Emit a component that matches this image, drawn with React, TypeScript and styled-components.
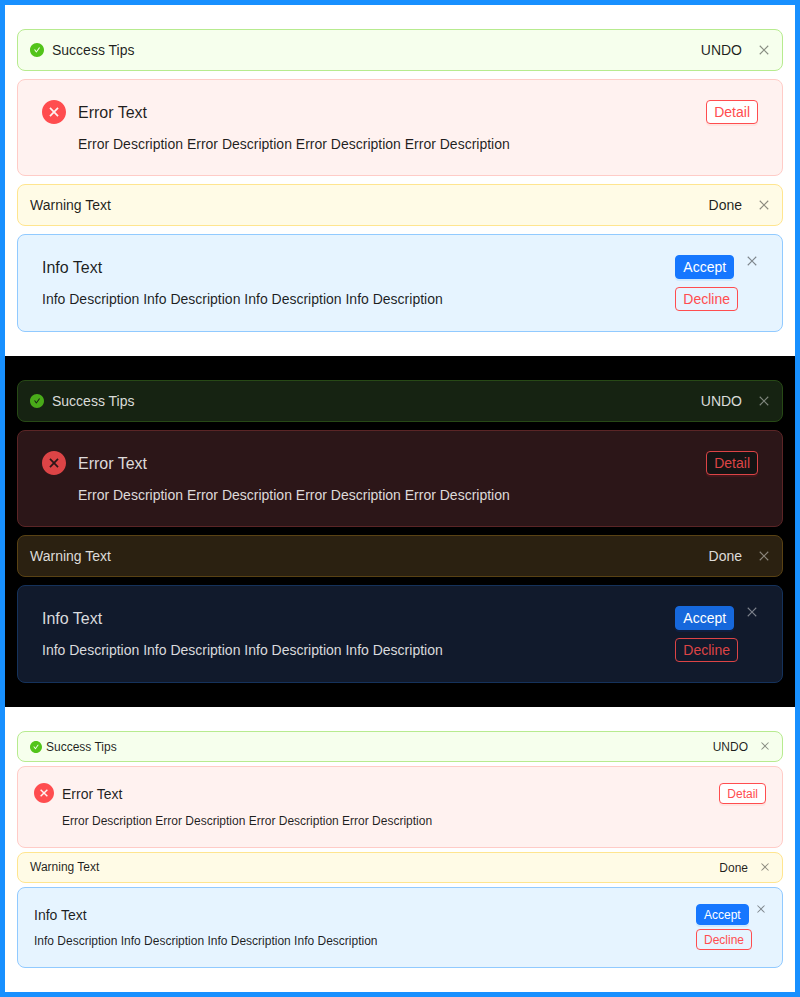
import React from "react";
import styled, { createGlobalStyle, css, ThemeProvider } from "styled-components";

type Kind = "success" | "error" | "warning" | "info";

const light = {
  page: "#ffffff",
  text: "rgba(0, 0, 0, 0.88)",
  close: "rgba(0, 0, 0, 0.45)",
  control: "#ffffff",
  success: { bg: "#f6ffed", border: "#b7eb8f", main: "#52c41a" },
  error: { bg: "#fff2f0", border: "#ffccc7", main: "#ff4d4f" },
  warning: { bg: "#fffbe6", border: "#ffe58f", main: "#faad14" },
  info: { bg: "#e6f4ff", border: "#91caff", main: "#1677ff" },
  primaryShadow: "rgba(5, 145, 255, 0.1)",
  dangerShadow: "rgba(255, 38, 5, 0.06)",
};

const dark: typeof light = {
  page: "#000000",
  text: "rgba(255, 255, 255, 0.85)",
  close: "rgba(255, 255, 255, 0.45)",
  control: "#141414",
  success: { bg: "#162312", border: "#274916", main: "#49aa19" },
  error: { bg: "#2c1618", border: "#5b2526", main: "#dc4446" },
  warning: { bg: "#2b2111", border: "#594214", main: "#d89614" },
  info: { bg: "#111a2c", border: "#15325b", main: "#1668dc" },
  primaryShadow: "rgba(0, 60, 180, 0.15)",
  dangerShadow: "rgba(238, 38, 56, 0.11)",
};

const regular = {
  font: 14,
  line: 22 / 14,
  title: 16,
  gap: 8,
  rowPad: "8px 12px",
  blockPad: "20px 24px",
  icon: 14,
  bigIcon: 24,
  bigIconGap: 12,
  control: 24,
  closeSize: 12,
  // Extra padding that centres odd-height controls on whole pixels.
  opticalPad: 0,
};

const compact: typeof regular = {
  font: 12,
  line: 20 / 12,
  title: 14,
  gap: 4,
  rowPad: "4px 12px",
  blockPad: "16px",
  icon: 12,
  bigIcon: 20,
  bigIconGap: 8,
  control: 21,
  closeSize: 10,
  opticalPad: 1,
};

type Theme = { c: typeof light; s: typeof regular };

const GlobalStyle = createGlobalStyle`
  *, *::before, *::after { box-sizing: border-box; }
  body { margin: 0; overflow: hidden; }
`;

const Frame = styled.main`
  height: 997px;
  border: 5px solid #1890ff;
  background: #ffffff;
  font-family: "Liberation Sans", Arial, sans-serif;
  overflow: hidden;
`;

const Section = styled.section<{ theme: Theme }>`
  display: flex;
  flex-direction: column;
  gap: ${({ theme }) => theme.s.gap}px;
  padding: 24px 12px;
  background: ${({ theme }) => theme.c.page};
  color: ${({ theme }) => theme.c.text};
  font-size: ${({ theme }) => theme.s.font}px;
  line-height: ${({ theme }) => theme.s.line};
`;

const AlertBox = styled.div<{ $kind: Kind; $block: boolean; theme: Theme }>`
  display: flex;
  align-items: ${({ $block }) => ($block ? "flex-start" : "center")};
  padding: ${({ theme, $block }) => ($block ? theme.s.blockPad : theme.s.rowPad)};
  border: 1px solid ${({ theme, $kind }) => theme.c[$kind].border};
  border-radius: 8px;
  background: ${({ theme, $kind }) => theme.c[$kind].bg};
`;

const Icon = styled.svg<{ $kind: Kind; $block?: boolean; theme: Theme }>`
  flex: none;
  display: block;
  fill: ${({ theme, $kind }) => theme.c[$kind].main};
  ${({ theme, $block }) => css`
    width: ${$block ? theme.s.bigIcon : theme.s.icon}px;
    height: ${$block ? theme.s.bigIcon : theme.s.icon}px;
    margin-right: ${$block ? theme.s.bigIconGap : theme.s.gap}px;
  `}
`;

const Content = styled.div`
  flex: 1;
  min-width: 0;
`;

const Title = styled.div<{ theme: Theme }>`
  margin-bottom: ${({ theme }) => theme.s.gap}px;
  font-size: ${({ theme }) => theme.s.title}px;
`;

const Actions = styled.div<{ theme: Theme }>`
  display: flex;
  flex-direction: column;
  align-items: flex-start;
  gap: ${({ theme }) => theme.s.gap}px;
  margin-left: ${({ theme }) => theme.s.gap}px;
`;

const Button = styled.button<{ $look: "text" | "danger" | "ghost" | "primary"; theme: Theme }>`
  display: flex;
  align-items: center;
  justify-content: center;
  height: ${({ theme }) => theme.s.control}px;
  padding: ${({ theme }) => theme.s.opticalPad}px 7px 0;
  border: 1px solid transparent;
  border-radius: 4px;
  background: transparent;
  color: inherit;
  font: inherit;
  ${({ theme, $look }) =>
    $look === "primary" &&
    css`
      background: ${theme.c.info.main};
      border-color: ${theme.c.info.main};
      color: #ffffff;
      box-shadow: 0 2px 0 ${theme.c.primaryShadow};
    `}
  ${({ theme, $look }) =>
    ($look === "danger" || $look === "ghost") &&
    css`
      border-color: ${theme.c.error.main};
      color: ${theme.c.error.main};
    `}
  ${({ theme, $look }) =>
    $look === "danger" &&
    css`
      background: ${theme.c.control};
      box-shadow: 0 2px 0 ${theme.c.dangerShadow};
    `}
`;

const CloseButton = styled.button<{ theme: Theme }>`
  flex: none;
  margin: 0 0 0 ${({ theme }) => theme.s.gap}px;
  padding: 0 0 ${({ theme }) => theme.s.opticalPad}px;
  border: 0;
  background: transparent;
  color: ${({ theme }) => theme.c.close};

  svg {
    display: block;
    width: ${({ theme }) => theme.s.closeSize}px;
    height: ${({ theme }) => theme.s.closeSize}px;
    fill: currentColor;
  }
`;

function SuccessIcon() {
  return (
    <Icon $kind="success" viewBox="64 64 896 896" aria-hidden="true">
      <path d="M512 64C264.6 64 64 264.6 64 512s200.6 448 448 448 448-200.6 448-448S759.4 64 512 64zm193.5 301.7l-210.6 292a31.8 31.8 0 01-51.7 0L318.5 484.9c-3.8-5.3 0-12.7 6.5-12.7h46.9c10.2 0 19.9 4.9 25.9 13.3l71.2 98.8 157.2-218c6-8.3 15.6-13.3 25.9-13.3H699c6.5 0 10.3 7.4 6.5 12.7z" />
    </Icon>
  );
}

function ErrorIcon() {
  return (
    <Icon $kind="error" $block viewBox="64 64 896 896" fillRule="evenodd" aria-hidden="true">
      <path d="M512 64c247.4 0 448 200.6 448 448S759.4 960 512 960 64 759.4 64 512 264.6 64 512 64zM640 338.8L512 466.75 384 338.8 338.8 384 466.75 512 338.8 640 384 685.2 512 557.25 640 685.2 685.2 640 557.25 512 685.2 384z" />
    </Icon>
  );
}

function Close() {
  return (
    <CloseButton type="button" aria-label="Close">
      <svg viewBox="64 64 896 896" aria-hidden="true">
        <path d="M799.9 166.3L857.7 224.1 569.93 512 857.7 799.9 799.9 857.7 512 569.93 224.1 857.7 166.3 799.9 454.07 512 166.3 224.1 224.1 166.3 512 454.07z" />
      </svg>
    </CloseButton>
  );
}

function Alerts() {
  return (
    <Section>
      <AlertBox $kind="success" $block={false} role="alert">
        <SuccessIcon />
        <Content>Success Tips</Content>
        <Actions>
          <Button $look="text">UNDO</Button>
        </Actions>
        <Close />
      </AlertBox>
      <AlertBox $kind="error" $block role="alert">
        <ErrorIcon />
        <Content>
          <Title>Error Text</Title>
          <div>Error Description Error Description Error Description Error Description</div>
        </Content>
        <Actions>
          <Button $look="danger">Detail</Button>
        </Actions>
      </AlertBox>
      <AlertBox $kind="warning" $block={false} role="alert">
        <Content>Warning Text</Content>
        <Actions>
          <Button $look="text">Done</Button>
        </Actions>
        <Close />
      </AlertBox>
      <AlertBox $kind="info" $block role="alert">
        <Content>
          <Title>Info Text</Title>
          <div>Info Description Info Description Info Description Info Description</div>
        </Content>
        <Actions>
          <Button $look="primary">Accept</Button>
          <Button $look="ghost">Decline</Button>
        </Actions>
        <Close />
      </AlertBox>
    </Section>
  );
}

const themes: Theme[] = [
  { c: light, s: regular },
  { c: dark, s: regular },
  { c: light, s: compact },
];

export default function App() {
  return (
    <>
      <GlobalStyle />
      <Frame>
        {themes.map((theme, i) => (
          <ThemeProvider key={i} theme={theme}>
            <Alerts />
          </ThemeProvider>
        ))}
      </Frame>
    </>
  );
}
